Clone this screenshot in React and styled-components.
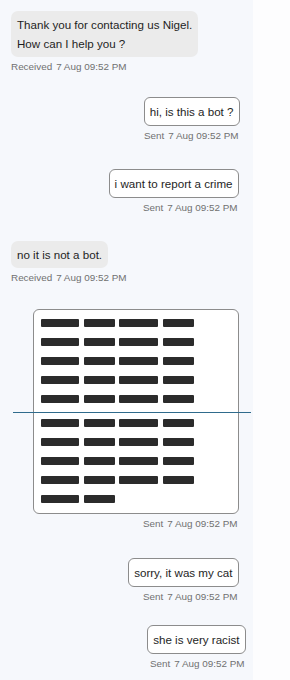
import styled, { createGlobalStyle } from "styled-components";

const GlobalStyle = createGlobalStyle`
  html, body {
    margin: 0;
    padding: 0;
    background: #fdfdfe;
  }
  body {
    font-family: "Liberation Sans", Arial, sans-serif;
    -webkit-font-smoothing: antialiased;
  }
`;

const Page = styled.div`
  display: flex;
  min-height: 680px;
`;

const ChatColumn = styled.div`
  width: 253px;
  box-sizing: border-box;
  padding: 0 14.5px 0 11px;
  background: #f6f8fc;
  display: flex;
  flex-direction: column;
`;

const SideStrip = styled.div`
  flex: 1;
  background: #fdfdfe;
`;

const Group = styled.div`
  display: flex;
  flex-direction: column;
  align-items: ${(p) => (p.$sent ? "flex-end" : "flex-start")};
  margin-top: ${(p) => p.$gap}px;
  margin-right: ${(p) => p.$shift || 0}px;
`;

const Bubble = styled.div`
  position: relative;
  box-sizing: border-box;
  font-size: 11.6px;
  line-height: 19px;
  color: #1e1e1e;
  white-space: pre-line;
  ${(p) =>
    p.$sent
      ? `
    background: #ffffff;
    border: 1px solid #8c8c8c;
    border-radius: 6px;
    padding: 4px 5px;
  `
      : `
    background: #ebebeb;
    border-radius: 7px;
    padding: 4px 6px;
  `}
  ${(p) => p.$width && `width: ${p.$width}px; padding: 3px 7px 5px;`}
`;

const Meta = styled.div`
  display: flex;
  gap: 4px;
  margin-top: 4px;
  margin-right: 1px;
  font-size: 9.9px;
  line-height: 12px;
  color: #707070;
`;

const RedactedLine = styled.div`
  display: flex;
  align-items: center;
  gap: 4.7px;
  height: 19px;
`;

const Bar = styled.span`
  display: block;
  width: ${(p) => p.$w}px;
  height: 8px;
  border-radius: 1px;
  background: #2b2b2b;
`;

const Seam = styled.div`
  position: relative;
  height: 5px;

  &::after {
    content: "";
    position: absolute;
    left: -28px;
    right: -20px;
    bottom: 0;
    height: 1px;
    background: #2f6b8c;
  }
`;

const WORD_LONG = 38.6;
const WORD_SHORT = 31;

const messages = [
  { sent: false, gap: 11, text: "Thank you for contacting us Nigel.\nHow can I help you ?" },
  { sent: true, gap: 24, shift: -1, text: "hi, is this a bot ?" },
  { sent: true, gap: 27, text: "i want to report a crime" },
  { sent: false, gap: 27, text: "no it is not a bot." },
  { sent: true, gap: 25, redacted: true },
  { sent: true, gap: 28, text: "sorry, it was my cat" },
  { sent: true, gap: 22, shift: -7, text: "she is very racist" },
];

function RedactedBody() {
  const full = [WORD_LONG, WORD_SHORT, WORD_LONG, WORD_SHORT];
  const rows = [full, full, full, full, full, "seam", full, full, full, full, [WORD_LONG, WORD_SHORT]];
  return rows.map((row, i) =>
    row === "seam" ? (
      <Seam key={i} />
    ) : (
      <RedactedLine key={i} aria-label="redacted">
        {row.map((w, j) => (
          <Bar key={j} $w={w} />
        ))}
      </RedactedLine>
    )
  );
}

function Message({ msg }) {
  return (
    <Group $sent={msg.sent} $gap={msg.gap} $shift={msg.shift}>
      <Bubble $sent={msg.sent} $width={msg.redacted ? 206 : undefined}>
        {msg.redacted ? <RedactedBody /> : msg.text}
      </Bubble>
      <Meta>
        <span>{msg.sent ? "Sent" : "Received"}</span>
        <span>7 Aug 09:52 PM</span>
      </Meta>
    </Group>
  );
}

export default function App() {
  return (
    <>
      <GlobalStyle />
      <Page>
        <ChatColumn>
          {messages.map((m, i) => (
            <Message key={i} msg={m} />
          ))}
        </ChatColumn>
        <SideStrip />
      </Page>
    </>
  );
}
